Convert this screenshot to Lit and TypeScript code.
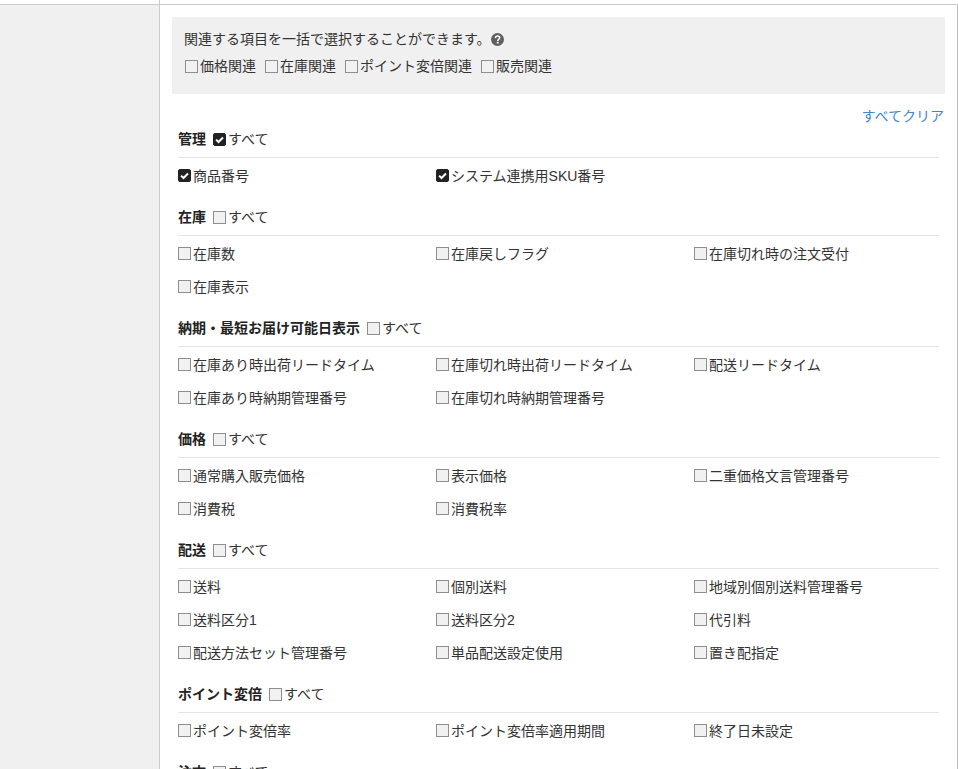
import { LitElement, html, css } from "lit";
import { customElement } from "lit/decorators.js";

interface Section { title: string; all: boolean; items: string[]; checked?: boolean }

const SECTIONS: Section[] = [
  { title: "管理", all: true, checked: true, items: ["商品番号", "システム連携用SKU番号"] },
  { title: "在庫", all: false, items: ["在庫数", "在庫戻しフラグ", "在庫切れ時の注文受付", "在庫表示"] },
  { title: "納期・最短お届け可能日表示", all: false, items: ["在庫あり時出荷リードタイム", "在庫切れ時出荷リードタイム", "配送リードタイム", "在庫あり時納期管理番号", "在庫切れ時納期管理番号"] },
  { title: "価格", all: false, items: ["通常購入販売価格", "表示価格", "二重価格文言管理番号", "消費税", "消費税率"] },
  { title: "配送", all: false, items: ["送料", "個別送料", "地域別個別送料管理番号", "送料区分1", "送料区分2", "代引料", "配送方法セット管理番号", "単品配送設定使用", "置き配指定"] },
  { title: "ポイント変倍", all: false, items: ["ポイント変倍率", "ポイント変倍率適用期間", "終了日未設定"] },
  { title: "注文", all: false, items: [] },
];

const box = (on: boolean) => html`<span class="box ${on ? "on" : ""}">${on
  ? html`<svg viewBox="0 0 13 13" width="13" height="13"><path d="M3.1 6.6 5.5 9 10 4.5" fill="none" stroke="#fff" stroke-width="2"/></svg>`
  : ""}</span>`;

@customElement("app-root")
export class AppRoot extends LitElement {
  static styles = css`
    :host {
      display: block; height: 769px; overflow: hidden; background: #fff; color: #333;
      font: 14px/20px "Liberation Sans", "Noto Sans CJK JP", sans-serif;
    }
    .top { height: 4px; border-bottom: 1px solid #ccc; display: flex; }
    .top i { width: 159px; border-right: 1px solid #ccc; }
    .page { display: flex; height: 764px; border-right: 1px solid #bbb; }
    .side { width: 159px; flex: none; background: #f0f0f0; border-right: 1px solid #ccc; }
    .main { flex: 1; min-width: 0; padding: 12px 12px 0 12px; }
    .panel { background: #f0f0f0; height: 77px; box-sizing: border-box; padding: 12px 12px 0; }
    .intro { display: flex; align-items: center; height: 20px; }
    .checks { display: flex; gap: 9px; margin: 7px 0 0 1px; }
    .check { display: inline-flex; align-items: center; gap: 2px; white-space: nowrap; }
    .box {
      width: 13px; height: 13px; box-sizing: border-box; flex: none; display: inline-block;
      border: 1px solid #8e8e8e; background: #f1f1f1;
    }
    .box.on { background: #222; border-color: #222; border-radius: 2px; }
    .box.on svg { display: block; margin: -1px; }
    .clear { text-align: right; color: #3f86d0; height: 20px; margin-top: 12px; padding-right: 1px; }
    .section { padding: 0 6px; }
    .head {
      display: flex; align-items: center; gap: 7px; height: 20px; padding-bottom: 8px;
      margin-top: 3px; border-bottom: 1px solid #e4e4e4;
    }
    .section + .section .head { margin-top: 15px; }
    .title { font-weight: 700; color: #222; white-space: nowrap; }
    .grid { display: grid; grid-template-columns: repeat(3, 258px); grid-auto-rows: 33px; margin-top: 1px; }
    .grid .check { height: 33px; }
  `;

  render() {
    return html`
      <div class="top"><i></i></div>
      <div class="page">
        <aside class="side"></aside>
        <main class="main">
          <div class="panel">
            <div class="intro">関連する項目を一括で選択することができます。<svg width="13" height="13" viewBox="0 0 13 13">
                <circle cx="6.5" cy="6.5" r="6.5" fill="#606060"/>
                <path d="M4.4 5.1C4.5 3.8 5.3 3 6.6 3 7.9 3 8.7 3.8 8.7 4.8 8.7 6.3 6.7 6.3 6.7 7.9" fill="none" stroke="#fff" stroke-width="1.5"/>
                <rect x="5.8" y="8.8" width="1.8" height="1.7" fill="#fff"/>
              </svg>
            </div>
            <div class="checks">
              ${["価格関連", "在庫関連", "ポイント変倍関連", "販売関連"].map((t) => html`<span class="check">${box(false)}${t}</span>`)}
            </div>
          </div>
          <div class="clear">すべてクリア</div>
          ${SECTIONS.map((s) => html`
            <section class="section">
              <div class="head">
                <span class="title">${s.title}</span>
                <span class="check">${box(s.all)}すべて</span>
              </div>
              <div class="grid">
                ${s.items.map((t) => html`<span class="check">${box(!!s.checked)}${t}</span>`)}
              </div>
            </section>`)}
        </main>
      </div>
    `;
  }
}
